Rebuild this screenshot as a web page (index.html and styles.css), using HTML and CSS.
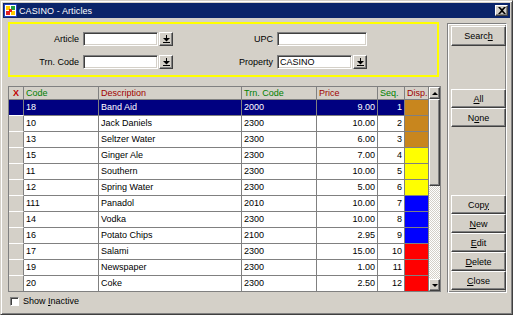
FILE: index.html
```html
<!DOCTYPE html>
<html lang="en">
<head>
  <meta charset="utf-8">
  <title>CASINO - Articles</title>
  <link rel="stylesheet" href="styles.css">
</head>
<body>
  <div class="window">
    <div class="titlebar">
      <span class="app-icon">
        <svg width="13" height="13" viewBox="0 0 13 13">
          <rect x="0" y="0" width="13" height="13" fill="#2040c0"/>
          <rect x="1" y="1" width="11" height="11" fill="#ffffff"/>
          <rect x="2" y="2" width="4" height="4" fill="#ffcc00"/>
          <rect x="7" y="2" width="4" height="4" fill="#20a040"/>
          <rect x="2" y="7" width="4" height="4" fill="#e02020"/>
          <rect x="7" y="7" width="4" height="4" fill="#ffcc00"/>
          <rect x="5" y="5" width="3" height="3" fill="#e02020"/>
        </svg>
      </span>
      <span class="title">CASINO - Articles</span>
      <span class="close-btn">
        <svg width="8" height="7" viewBox="0 0 8 7">
          <path d="M0 0h2l2 2 2-2h2L5 3.5 8 7H6L4 5 2 7H0l3-3.5z" fill="#000"/>
        </svg>
      </span>
    </div>

    <div class="client">
      <div class="main">
        <div class="search">
          <div class="search-row">
            <label class="lbl-left">Article</label>
            <input class="text w75" type="text" value="">
            <button class="dd"><svg width="7" height="8" viewBox="0 0 7 8"><rect x="3" y="0" width="1" height="3"/><path d="M0 3h7L3.5 6.5z"/><rect x="0" y="7" width="7" height="1"/></svg></button>
            <label class="lbl-right">UPC</label>
            <input class="text w90" type="text" value="">
          </div>
          <div class="search-row">
            <label class="lbl-left">Trn. Code</label>
            <input class="text w75" type="text" value="">
            <button class="dd"><svg width="7" height="8" viewBox="0 0 7 8"><rect x="3" y="0" width="1" height="3"/><path d="M0 3h7L3.5 6.5z"/><rect x="0" y="7" width="7" height="1"/></svg></button>
            <label class="lbl-right">Property</label>
            <input class="text w75" type="text" value="CASINO">
            <button class="dd"><svg width="7" height="8" viewBox="0 0 7 8"><rect x="3" y="0" width="1" height="3"/><path d="M0 3h7L3.5 6.5z"/><rect x="0" y="7" width="7" height="1"/></svg></button>
          </div>
        </div>

        <div class="grid">
          <table class="articles">
            <colgroup>
              <col style="width:15px">
              <col style="width:75px">
              <col style="width:143px">
              <col style="width:75px">
              <col style="width:61px">
              <col style="width:27px">
              <col style="width:24px">
            </colgroup>
            <thead>
              <tr>
                <th class="xcol">X</th>
                <th class="green">Code</th>
                <th class="red">Description</th>
                <th class="green">Trn. Code</th>
                <th class="red">Price</th>
                <th class="green">Seq.</th>
                <th class="red">Disp.</th>
              </tr>
            </thead>
            <tbody>
              <tr class="selected"><td class="sel"></td><td>18</td><td>Band Aid</td><td>2000</td><td class="num">9.00</td><td class="num">1</td><td class="d-orange"></td></tr>
              <tr><td class="sel"></td><td>10</td><td>Jack Daniels</td><td>2300</td><td class="num">10.00</td><td class="num">2</td><td class="d-orange"></td></tr>
              <tr><td class="sel"></td><td>13</td><td>Seltzer Water</td><td>2300</td><td class="num">6.00</td><td class="num">3</td><td class="d-orange"></td></tr>
              <tr><td class="sel"></td><td>15</td><td>Ginger Ale</td><td>2300</td><td class="num">7.00</td><td class="num">4</td><td class="d-yellow"></td></tr>
              <tr><td class="sel"></td><td>11</td><td>Southern</td><td>2300</td><td class="num">10.00</td><td class="num">5</td><td class="d-yellow"></td></tr>
              <tr><td class="sel"></td><td>12</td><td>Spring Water</td><td>2300</td><td class="num">5.00</td><td class="num">6</td><td class="d-yellow"></td></tr>
              <tr><td class="sel"></td><td>111</td><td>Panadol</td><td>2010</td><td class="num">10.00</td><td class="num">7</td><td class="d-blue"></td></tr>
              <tr><td class="sel"></td><td>14</td><td>Vodka</td><td>2300</td><td class="num">10.00</td><td class="num">8</td><td class="d-blue"></td></tr>
              <tr><td class="sel"></td><td>16</td><td>Potato Chips</td><td>2100</td><td class="num">2.95</td><td class="num">9</td><td class="d-blue"></td></tr>
              <tr><td class="sel"></td><td>17</td><td>Salami</td><td>2300</td><td class="num">15.00</td><td class="num">10</td><td class="d-red"></td></tr>
              <tr><td class="sel"></td><td>19</td><td>Newspaper</td><td>2300</td><td class="num">1.00</td><td class="num">11</td><td class="d-red"></td></tr>
              <tr class="last"><td class="sel"></td><td>20</td><td>Coke</td><td>2300</td><td class="num">2.50</td><td class="num">12</td><td class="d-red"></td></tr>
            </tbody>
          </table>
          <div class="vscroll">
            <span class="sb-btn"><span class="arrow-up"></span></span>
            <span class="sb-thumb"></span>
            <span class="sb-track"></span>
            <span class="sb-btn"><span class="arrow-down"></span></span>
          </div>
        </div>

        <label class="check"><span class="box"></span><span>Show <u>I</u>nactive</span></label>
      </div>

      <div class="side">
        <button class="btn search-btn">Searc<u>h</u></button>
        <div class="btn-group pick">
          <button class="btn"><u>A</u>ll</button>
          <button class="btn">N<u>o</u>ne</button>
        </div>
        <div class="btn-group actions">
          <button class="btn">Cop<u>y</u></button>
          <button class="btn"><u>N</u>ew</button>
          <button class="btn"><u>E</u>dit</button>
          <button class="btn"><u>D</u>elete</button>
          <button class="btn"><u>C</u>lose</button>
        </div>
      </div>
    </div>
  </div>
</body>
</html>
```

FILE: styles.css
```css
html, body {
  margin: 0;
  padding: 0;
}
body {
  font-family: "Liberation Sans", Arial, sans-serif;
  font-size: 9px;
  color: #000;
  background: #d4d0c8;
}
.window {
  width: 513px;
  height: 315px;
  box-sizing: border-box;
  background: #d4d0c8;
  border: 1px solid;
  border-color: #d4d0c8 #404040 #404040 #d4d0c8;
  box-shadow: inset 1px 1px #fff, inset -1px -1px #808080;
  padding: 2px;
}

/* title bar */
.titlebar {
  height: 15px;
  background: #0a246a;
  color: #fff;
  display: flex;
  align-items: center;
  padding-left: 1px;
}
.app-icon {
  width: 13px;
  height: 13px;
  display: flex;
}
.title {
  margin-left: 2px;
  font-size: 9px;
  letter-spacing: 0.1px;
}
.close-btn {
  margin-left: auto;
  margin-right: 2px;
  width: 11px;
  height: 9px;
  display: flex;
  align-items: center;
  justify-content: center;
  background: #d4d0c8;
  border: 1px solid;
  border-color: #fff #404040 #404040 #fff;
  box-shadow: inset -1px -1px #808080;
}

/* client area */
.client {
  display: flex;
  gap: 6px;
  padding: 4px 0 0 5px;
}
.main {
  width: 433px;
  display: flex;
  flex-direction: column;
}

/* search panel */
.search {
  width: 431px;
  height: 55px;
  box-sizing: border-box;
  border: 2px solid #ffff00;
  padding-top: 8px;
  display: flex;
  flex-direction: column;
  gap: 9px;
}
.search-row {
  display: flex;
  align-items: center;
  height: 14px;
}
.lbl-left {
  width: 69px;
  text-align: right;
  margin-right: 4px;
}
.lbl-right {
  width: 100px;
  text-align: right;
  margin-right: 4px;
}
.text {
  height: 14px;
  box-sizing: border-box;
  border: 1px solid;
  border-color: #808080 #fff #fff #808080;
  box-shadow: inset 1px 1px #404040, inset -1px -1px #d4d0c8;
  background: #fff;
  font-family: "Liberation Sans", Arial, sans-serif;
  font-size: 9px;
  padding: 0 2px;
  margin: 0;
  outline: none;
}
.w75 { width: 75px; }
.w90 { width: 90px; }
.dd {
  width: 14px;
  height: 14px;
  margin: 0 0 0 1px;
  padding: 0;
  box-sizing: border-box;
  background: #d4d0c8;
  border: 1px solid;
  border-color: #fff #404040 #404040 #fff;
  box-shadow: inset -1px -1px #808080;
  display: flex;
  align-items: center;
  justify-content: center;
}

/* grid */
.grid {
  margin-top: 9px;
  display: flex;
  border: 1px solid #808080;
  background: #fff;
}
.articles {
  table-layout: fixed;
  width: 420px;
  border-collapse: separate;
  border-spacing: 0;
}
.articles th,
.articles td {
  padding: 0 2px;
  border-right: 1px solid #808080;
  border-bottom: 1px solid #808080;
  white-space: nowrap;
  overflow: hidden;
  text-align: left;
  font-weight: normal;
  box-sizing: border-box;
}
.articles th {
  height: 13px;
  background: #d4d0c8;
  line-height: 12px;
}
.articles td {
  height: 16px;
  line-height: 15px;
}
.articles tr.last td {
  border-bottom: none;
  height: 15px;
}
.articles th.xcol {
  color: #c00000;
  font-weight: bold;
  text-align: center;
  padding: 0;
}
.green { color: #008000; }
.red { color: #a00000; }
.articles td.num {
  text-align: right;
}
.articles td.sel {
  background: #d4d0c8;
  border-bottom-color: #fff;
}
.articles tr.selected td {
  background: #000080;
  color: #fff;
}
.articles td.d-orange { background: #c8861e; }
.articles td.d-yellow { background: #ffff00; }
.articles td.d-blue { background: #0000ff; }
.articles td.d-red { background: #ff0000; }
.articles tr.selected td.d-orange { background: #c8861e; }

/* scrollbar */
.vscroll {
  width: 11px;
  display: flex;
  flex-direction: column;
  background: repeating-conic-gradient(#fff 0 25%, #d4d0c8 0 50%) 0 0 / 2px 2px;
}
.sb-btn,
.sb-thumb {
  box-sizing: border-box;
  background: #d4d0c8;
  border: 1px solid;
  border-color: #fff #404040 #404040 #fff;
  box-shadow: inset -1px -1px #808080;
}
.sb-btn {
  height: 12px;
  display: flex;
  align-items: center;
  justify-content: center;
}
.sb-thumb {
  height: 87px;
}
.sb-track {
  flex: 1;
}
.arrow-up {
  width: 0;
  height: 0;
  border-left: 3px solid transparent;
  border-right: 3px solid transparent;
  border-bottom: 3px solid #000;
}
.arrow-down {
  width: 0;
  height: 0;
  border-left: 3px solid transparent;
  border-right: 3px solid transparent;
  border-top: 3px solid #000;
}

/* checkbox */
.check {
  display: flex;
  align-items: center;
  margin-top: 4px;
  padding-left: 2px;
  height: 10px;
}
.check .box {
  width: 9px;
  height: 9px;
  box-sizing: border-box;
  margin-right: 4px;
  background: #fff;
  border: 1px solid;
  border-color: #808080 #fff #fff #808080;
  box-shadow: inset 1px 1px #404040;
}

/* right buttons */
.side {
  width: 60px;
  height: 270px;
  box-sizing: border-box;
  border: 1px solid;
  border-color: #808080 #fff #fff #808080;
  box-shadow: inset 1px 1px #fff, inset -1px -1px #808080;
  padding: 2px 2px 0 3px;
  margin-top: 1px;
  display: flex;
  flex-direction: column;
}
.btn {
  width: 55px;
  height: 19px;
  margin: 0;
  padding: 0;
  box-sizing: border-box;
  background: #d4d0c8;
  border: 1px solid;
  border-color: #fff #404040 #404040 #fff;
  box-shadow: inset -1px -1px #808080;
  font-family: "Liberation Sans", Arial, sans-serif;
  font-size: 9px;
  color: #000;
}
.search-btn {
  height: 20px;
}
.btn-group {
  display: flex;
  flex-direction: column;
}
.pick {
  margin-top: 43px;
}
.actions {
  margin-top: 68px;
}
```
